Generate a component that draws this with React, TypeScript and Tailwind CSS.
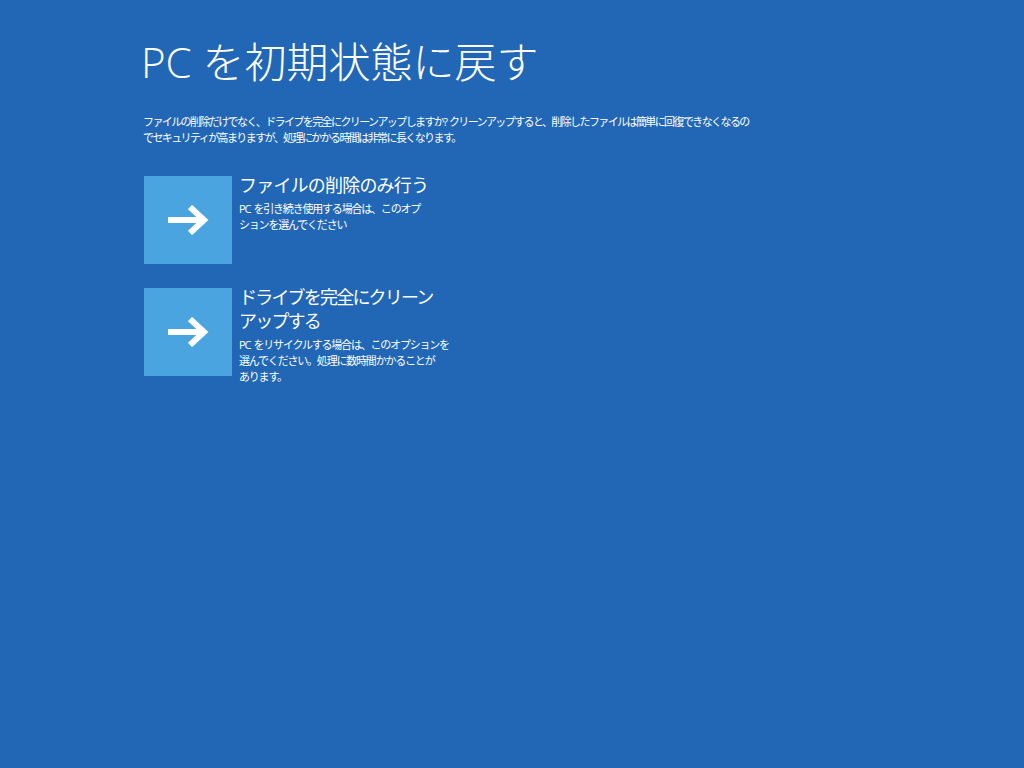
const Arrow = () => (
  <svg width="44" height="32" viewBox="0 0 44 32" fill="none">
    <path d="M2 16 H38" stroke="white" strokeWidth="6" />
    <path d="M24 3 L38 16 L24 29" stroke="white" strokeWidth="6" strokeLinejoin="miter" />
  </svg>
);

interface OptionProps {
  title: React.ReactNode;
  desc: React.ReactNode;
  titleClass: string;
}

const Option = ({ title, desc, titleClass }: OptionProps) => (
  <div className="flex gap-2">
    <div className="w-[88px] h-[88px] bg-[#49a4df] flex items-center justify-center shrink-0">
      <Arrow />
    </div>
    <div className="-mt-[3px] -ml-[1px]">
      <div className={`text-[18px] leading-[24px] whitespace-nowrap ${titleClass}`}>{title}</div>
      <div className="mt-[4px] text-[11px] leading-[16px] tracking-[-1.2px] whitespace-nowrap">{desc}</div>
    </div>
  </div>
);

export default function App() {
  return (
    <div
      className="w-[1024px] h-[768px] bg-[#2267b5] text-white pl-[141px] pt-[32px]"
      style={{ fontFamily: '"Open Sans", "Noto Sans CJK JP", sans-serif' }}
    >
      <h1 className="text-[42px] leading-[60px] font-light">PC を初期状態に戻す</h1>
      <p className="mt-[22px] ml-[2px] text-[11px] leading-[16px] tracking-[-1.6px] whitespace-nowrap">
        ファイルの削除だけでなく、ドライブを完全にクリーンアップしますか?&nbsp; クリーンアップすると、削除したファイルは簡単に回復できなくなるの
        <br />
        でセキュリティが高まりますが、処理にかかる時間は非常に長くなります。
      </p>
      <div className="mt-[30px] ml-[3px] flex flex-col gap-6">
        <Option
          titleClass="tracking-[-0.8px]"
          title="ファイルの削除のみ行う"
          desc={
            <>
              PC&nbsp; を引き続き使用する場合は、このオプ
              <br />
              ションを選んでください
            </>
          }
        />
        <Option
          titleClass="tracking-[-1.8px]"
          title={
            <>
              ドライブを完全にクリーン
              <br />
              アップする
            </>
          }
          desc={
            <>
              PC&nbsp; をリサイクルする場合は、このオプションを
              <br />
              選んでください。処理に数時間かかることが
              <br />
              あります。
            </>
          }
        />
      </div>
    </div>
  );
}
